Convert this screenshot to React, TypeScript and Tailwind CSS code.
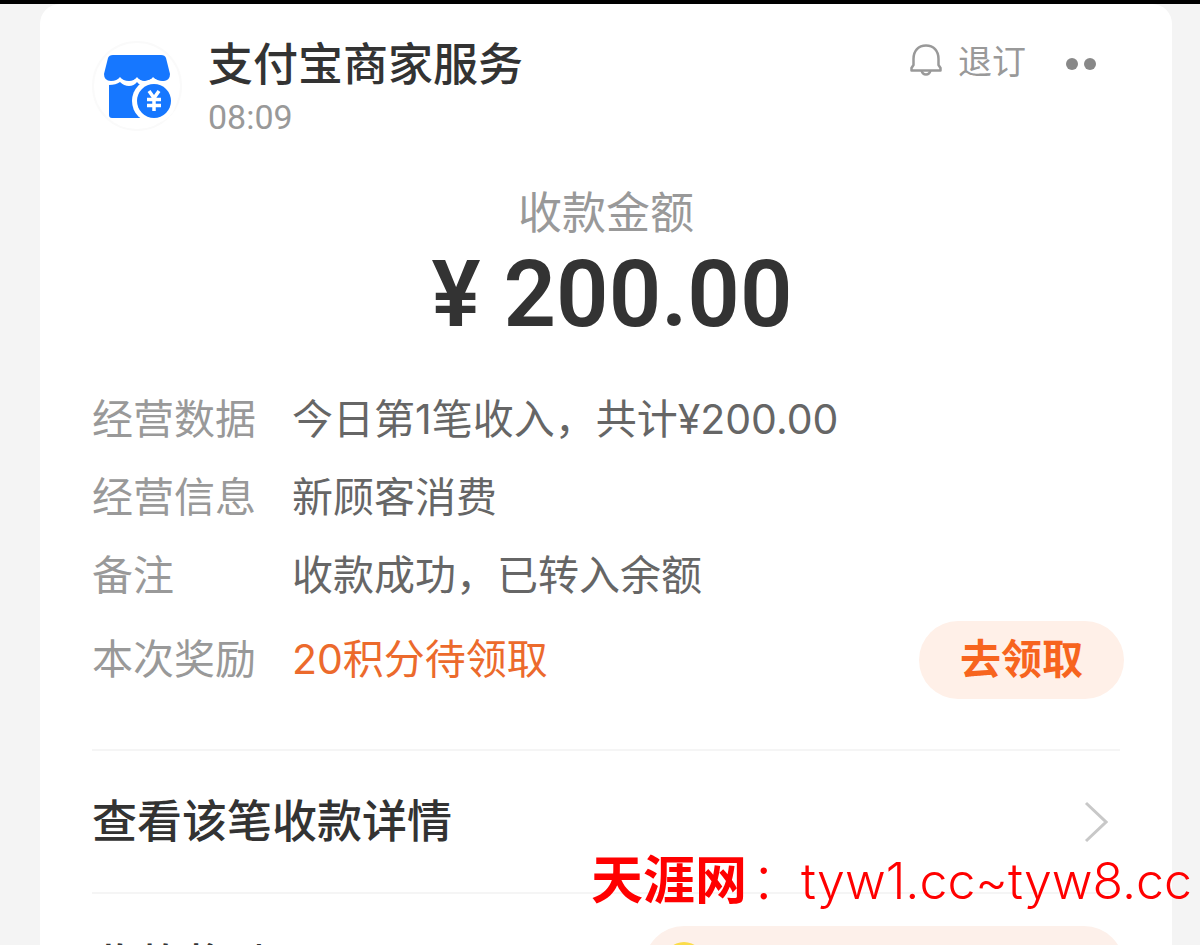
import React from 'react';

const rows = [
  { label: '经营数据', value: '今日第1笔收入，共计¥200.00' },
  { label: '经营信息', value: '新顾客消费' },
  { label: '备注', value: '收款成功，已转入余额' },
];

const ShopLogo: React.FC = () => (
  <svg viewBox="0 0 92 92" className="w-23 h-23 shrink-0" aria-hidden="true">
    <circle cx="45" cy="46" r="44" fill="#fff" stroke="#fafafa" strokeWidth="2" />
    <path
      d="M21 15H69Q73 15 74 18L78 34Q78 41 71 41Q65 41 61 37Q58 41 53 41Q48 41 45 37Q42 41 37 41Q31 41 28 37Q25 41 19 41Q12 41 12 34L16 18Q17 15 21 15Z"
      fill="#1677ff"
    />
    <path d="M17 45Q24 45 28 42Q32 46 37 46Q42 46 45 42Q48 46 53 46Q58 46 61 42V78H20Q17 78 17 75Z" fill="#1677ff" />
    <circle cx="62" cy="61" r="22" fill="#fff" />
    <path d="M38 40Q42 40 45 36.5Q48 40.5 53 40.5Q58 40.5 61 36.5Q65 41 71 41L76 39V30H38Z" fill="#1677ff" />
    <circle cx="62" cy="61" r="17" fill="#1677ff" />
    <path d="M57 51L62 58L67 51M62 57V71M55 59.5H69M55 65.5H69" fill="none" stroke="#fff" strokeWidth="3.5" />
  </svg>
);

const BellIcon: React.FC = () => (
  <svg viewBox="0 0 32 32" className="size-8 -mt-1" fill="none" stroke="#999" strokeWidth="2.5" strokeLinejoin="round" aria-hidden="true">
    <path d="M3.5 15C3.5 6.5 8.5 1.5 16 1.5S28.5 6.5 28.5 15V21L30.5 24V26.5H1.5V24L3.5 21Z" />
    <path d="M11.5 26.5Q12.5 30.5 16 30.5Q19.5 30.5 20.5 26.5" />
  </svg>
);

export default function App() {
  return (
    <div
      lang="zh-CN"
      className="relative h-screen overflow-hidden border-t-4 border-black bg-[#f4f4f4] pl-10 pr-7 font-['Inter','Noto_Sans_CJK_SC',sans-serif] text-[#333]"
    >
      <main className="h-full rounded-t-[20px] bg-white px-13">
        <header className="flex items-start pt-9">
          <ShopLogo />
          <div className="ml-6 pt-px">
            <h1 className="text-[45px] leading-12 font-medium">支付宝商家服务</h1>
            <p className="mt-3 font-['Roboto'] text-[34px] leading-8 text-[#999]">08:09</p>
          </div>
          <div className="ml-auto mr-6 flex h-12 items-center">
            <button className="flex items-center gap-4 pb-1 text-[34px] leading-11 text-[#999]">
              <BellIcon />
              退订
            </button>
            <button aria-label="更多" className="ml-10 flex gap-1.5">
              <span className="size-3 rounded-full bg-[#888]" />
              <span className="size-3 rounded-full bg-[#888]" />
            </button>
          </div>
        </header>

        <section className="mt-13 text-center">
          <h2 className="text-[44px] leading-14 text-[#999]">收款金额</h2>
          <p className="pl-3 font-['Roboto'] text-[92px] leading-27 font-semibold">¥ 200.00</p>
        </section>

        <dl className="mt-8 text-[41px]">
          {rows.map((row) => (
            <div key={row.label} className="flex h-[78px] items-center">
              <dt className="w-50 shrink-0 text-[#999]">{row.label}</dt>
              <dd className="text-[#666]">{row.value}</dd>
            </div>
          ))}
          <div className="flex h-[90px] items-center">
            <dt className="w-50 shrink-0 text-[#999]">本次奖励</dt>
            <dd className="flex flex-1 items-center justify-between text-[#ec6a2c]">
              20积分待领取
              <button className="-mr-1 h-[78px] rounded-full bg-[#fff0e8] px-[41px] font-bold text-[#f7641e]">去领取</button>
            </dd>
          </div>
        </dl>

        <a href="#detail" className="mt-11 flex h-[145px] items-center justify-between border-y-2 border-[#f5f5f5] text-[45px] font-medium">
          查看该笔收款详情
          <svg viewBox="0 0 24 42" className="mr-3 h-[42px] w-6" fill="none" stroke="#c8c8c8" strokeWidth="3" aria-hidden="true">
            <path d="M2 2L22 21L2 40" />
          </svg>
        </a>

        <div className="flex items-start justify-between pt-8">
          <h2 className="pt-3 text-[45px] leading-14 font-medium">收款奖励</h2>
          <button aria-label="领取奖励" className="-mr-1 flex h-20 w-[480px] items-start rounded-full bg-[#fdf0ea] px-5 pt-4">
            <span className="size-10 rounded-full bg-[#fbdc4a]" />
          </button>
        </div>
      </main>

      <p className="absolute right-2 bottom-8 flex items-center gap-1 whitespace-nowrap text-[50px] leading-16 text-[#f00]">
        <span className="text-[52px] font-bold">天涯网</span>
        <span className="font-light">：tyw1.cc~tyw8.cc</span>
      </p>
    </div>
  );
}
